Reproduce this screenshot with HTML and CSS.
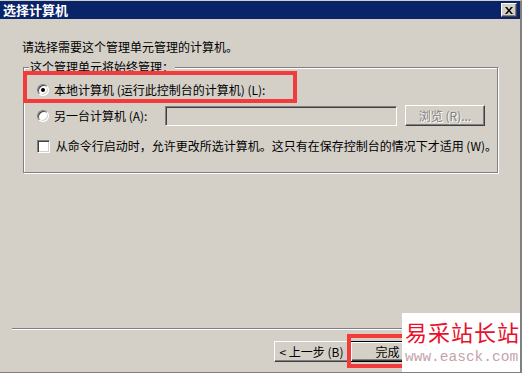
FILE: index.html
```html
<!DOCTYPE html>
<html lang="zh-CN">
<head>
    <meta charset="UTF-8">
    <title>选择计算机</title>
    <link rel="stylesheet" href="styles.css">
</head>
<body>
    <div class="window">
        <div class="titlebar">
            <span class="title">选择计算机</span>
            <span class="close">
                <svg width="8" height="7" viewBox="0 0 8 7"><path d="M0 0h2l2 2.4L6 0h2L5 3.5 8 7H6L4 4.6 2 7H0l3-3.5z" fill="#000"/></svg>
            </span>
        </div>
        <div class="body">
            <p class="intro">请选择需要这个管理单元管理的计算机。</p>
            <div class="group">
                <span class="legend">这个管理单元将始终管理：</span>
                <div class="row row-local">
                    <span class="radio checked"></span>
                    <span>本地计算机 (运行此控制台的计算机) (L):</span>
                </div>
                <div class="row row-other">
                    <span class="radio"></span>
                    <span class="label">另一台计算机 (A):</span>
                    <span class="field"></span>
                    <span class="btn btn-browse disabled">浏览 (R)...</span>
                </div>
                <div class="row row-check">
                    <span class="check"></span>
                    <span>从命令行启动时，允许更改所选计算机。这只有在保存控制台的情况下才适用 (W)。</span>
                </div>
            </div>
            <div class="separator"></div>
            <div class="buttons">
                <span class="btn btn-back">&lt; 上一步 (B)</span>
                <span class="btn default">完成</span>
            </div>
        </div>

        <!-- marcações vermelhas e marca d'água por cima -->
        <div class="mark mark-local"></div>
        <div class="mark mark-finish"></div>
        <div class="watermark">
            <div class="wm-name">易采站长站</div>
            <div class="wm-url">www.easck.com</div>
        </div>
    </div>
</body>
</html>
```

FILE: styles.css
```css
body {
    margin: 0;
    font-family: "Noto Sans CJK SC", "Liberation Sans", sans-serif;
    font-size: 12px;
    color: #000000;
    background-color: #d4d0c8;
}
.window {
    position: relative;
    width: 522px;
    height: 373px;
    box-sizing: border-box;
    background-color: #d4d0c8;
    border-top: 1px solid #d4d0c8;
    border-right: 2px solid #808080;
    border-bottom: 1px solid #808080;
    display: flex;
    flex-direction: column;
    overflow: hidden;
}
.titlebar {
    height: 18px;
    background-color: #0a246a; /* azul escuro da barra */
    display: flex;
    align-items: center;
    justify-content: space-between;
    padding: 0 3px;
}
.title {
    color: #ffffff;
    font-weight: bold;
    font-size: 13px;
    line-height: 18px;
}
.close {
    width: 16px;
    height: 14px;
    box-sizing: border-box;
    display: flex;
    align-items: center;
    justify-content: center;
    background-color: #d4d0c8;
    border: 1px solid;
    border-color: #ffffff #404040 #404040 #ffffff;
    box-shadow: inset -1px -1px #808080;
}
.body {
    flex: 1;
    display: flex;
    flex-direction: column;
    padding: 0 0 10px 22px;
}
.intro {
    margin: 21px 0 0;
    line-height: 14px;
}
.group {
    position: relative;
    width: 475px;
    box-sizing: border-box;
    margin: 13px 0 0 1px;
    padding: 12px 0 16px 13px;
    border: 1px solid #808080;
    box-shadow: inset 1px 1px #ffffff, 1px 1px #ffffff;
}
.legend {
    position: absolute;
    top: -8px;
    left: 5px;
    padding: 0 1px;
    line-height: 14px;
    background-color: #d4d0c8;
}
.row {
    display: flex;
    align-items: center;
    height: 20px;
    line-height: 14px;
    white-space: nowrap;
}
.row-other {
    height: 21px;
    margin-top: 5px;
}
.row-check {
    margin-top: 10px;
}
.radio {
    position: relative;
    width: 12px;
    height: 12px;
    box-sizing: border-box;
    margin-right: 5px;
    border-radius: 50%;
    background-color: #ffffff;
    border: 1px solid;
    border-color: #808080 #ffffff #ffffff #808080;
    box-shadow: inset 1px 1px #404040, inset -1px -1px #d4d0c8;
}
.radio.checked::after {
    content: "";
    position: absolute;
    left: 3px;
    top: 3px;
    width: 4px;
    height: 4px;
    border-radius: 50%;
    background-color: #000000;
}
.check {
    width: 13px;
    height: 13px;
    box-sizing: border-box;
    margin-right: 6px;
    background-color: #ffffff;
    border: 1px solid;
    border-color: #808080 #ffffff #ffffff #808080;
    box-shadow: inset 1px 1px #404040, inset -1px -1px #d4d0c8;
}
.label {
    width: 111px;
}
.field {
    width: 232px;
    height: 20px;
    box-sizing: border-box;
    background-color: #d4d0c8;
    border: 1px solid;
    border-color: #808080 #ffffff #ffffff #808080;
    box-shadow: inset 1px 1px #404040, inset -1px -1px #d4d0c8;
}
.btn {
    width: 75px;
    height: 21px;
    box-sizing: border-box;
    display: flex;
    align-items: center;
    justify-content: center;
    line-height: 14px;
    background-color: #d4d0c8;
    border: 1px solid;
    border-color: #ffffff #404040 #404040 #ffffff;
    box-shadow: inset -1px -1px #808080;
    white-space: nowrap;
}
.btn-browse {
    width: 80px;
    margin-left: 8px;
}
.btn.disabled {
    color: #808080;
    text-shadow: 1px 1px #ffffff;
}
.btn.default {
    border-color: #000000;
    box-shadow: inset 1px 1px #ffffff, inset -1px -1px #404040, inset -2px -2px #808080;
}
.separator {
    margin-top: auto;
    margin-left: -10px;
    width: 498px;
    border-top: 1px solid #808080;
    border-bottom: 1px solid #ffffff;
}
.buttons {
    margin-top: 11px;
    padding-right: 95px;
    display: flex;
    justify-content: flex-end;
    gap: 1px;
}
.mark {
    position: absolute;
    box-sizing: border-box;
    border: 4px solid #f23c3c; /* marcação vermelha */
}
.mark-local {
    left: 23px;
    top: 70px;
    width: 274px;
    height: 32px;
}
.mark-finish {
    left: 347px;
    top: 333px;
    width: 80px;
    height: 34px;
}
.watermark {
    position: absolute;
    left: 402px;
    top: 312px;
    width: 120px;
    height: 61px;
    box-sizing: border-box;
    padding: 5px 0 0 3px;
    background-color: #ffffff;
}
.wm-name {
    color: #e8102a;
    font-size: 22px;
    line-height: 26px;
    letter-spacing: 1px;
    white-space: nowrap;
}
.wm-url {
    margin-top: 5px;
    color: #c4a4ac;
    font-family: "Liberation Mono", monospace;
    font-size: 14.5px;
    line-height: 16px;
    white-space: nowrap;
}
```
